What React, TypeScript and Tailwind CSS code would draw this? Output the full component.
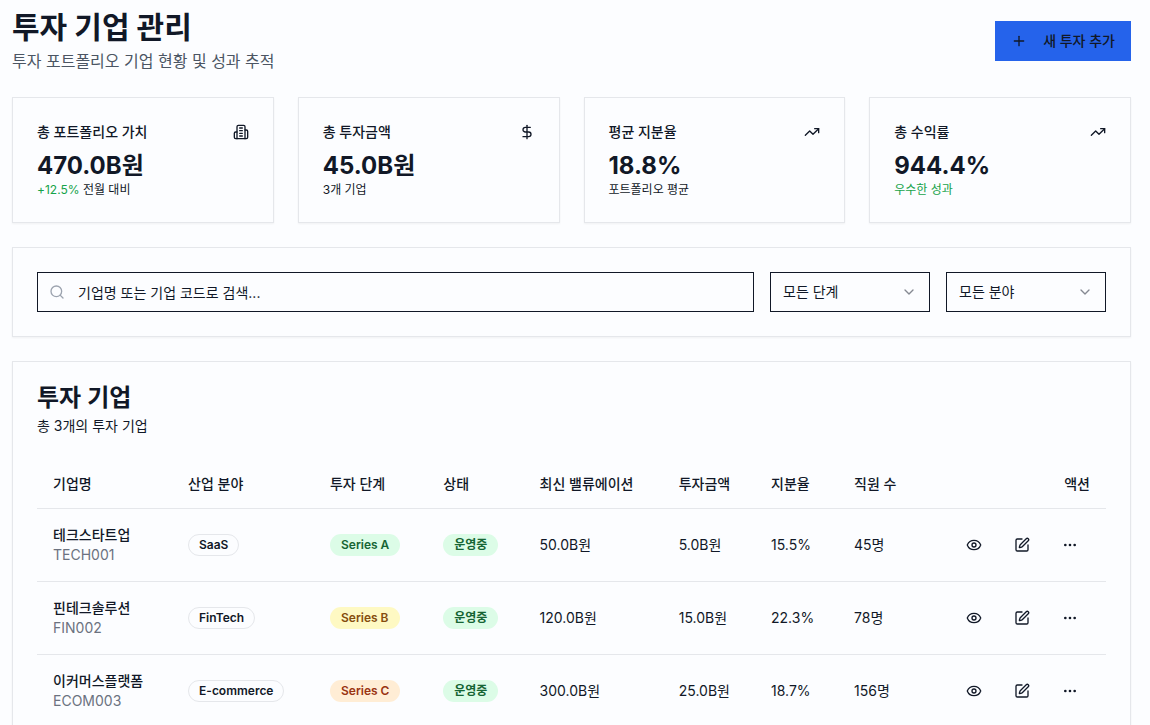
import { useState } from "react";
import { ChevronDown, DollarSign, Ellipsis, Eye, Plus, Search, SquarePen, TrendingUp } from "lucide-react";
import type { ComponentType, ReactNode } from "react";

type IconType = ComponentType<{ className?: string }>;

type Company = {
  name: string;
  code: string;
  sector: string;
  stage: string;
  status: string;
  valuation: string;
  invested: string;
  share: string;
  employees: string;
};

const companies: Company[] = [
  {
    name: "테크스타트업",
    code: "TECH001",
    sector: "SaaS",
    stage: "Series A",
    status: "운영중",
    valuation: "50.0B원",
    invested: "5.0B원",
    share: "15.5%",
    employees: "45명"
  },
  {
    name: "핀테크솔루션",
    code: "FIN002",
    sector: "FinTech",
    stage: "Series B",
    status: "운영중",
    valuation: "120.0B원",
    invested: "15.0B원",
    share: "22.3%",
    employees: "78명"
  },
  {
    name: "이커머스플랫폼",
    code: "ECOM003",
    sector: "E-commerce",
    stage: "Series C",
    status: "운영중",
    valuation: "300.0B원",
    invested: "25.0B원",
    share: "18.7%",
    employees: "156명"
  }
];

const stageColors: Record<string, string> = {
  "Series A": "border-transparent bg-[#dcfce7] text-[#166534]",
  "Series B": "border-transparent bg-[#fef9c3] text-[#854d0e]",
  "Series C": "border-transparent bg-[#ffedd5] text-[#9a3412]"
};

const columns = ["기업명", "산업 분야", "투자 단계", "상태", "최신 밸류에이션", "투자금액", "지분율", "직원 수"];

function BuildingIcon({ className }: { className?: string }) {
  return (
    <svg
      viewBox="0 0 24 24"
      fill="none"
      stroke="currentColor"
      strokeWidth="2"
      strokeLinecap="round"
      strokeLinejoin="round"
      aria-hidden="true"
      className={className}
    >
      <path d="M6 22V4a2 2 0 0 1 2-2h8a2 2 0 0 1 2 2v18Z" />
      <path d="M6 12H4a2 2 0 0 0-2 2v6a2 2 0 0 0 2 2h2" />
      <path d="M18 9h2a2 2 0 0 1 2 2v9a2 2 0 0 1-2 2h-2" />
      <path d="M10 6h4" />
      <path d="M10 10h4" />
      <path d="M10 14h4" />
      <path d="M10 18h4" />
    </svg>
  );
}

function StatCard({
  title,
  value,
  icon: Icon,
  children
}: {
  title: string;
  value: string;
  icon: IconType;
  children: ReactNode;
}) {
  return (
    <section className="border border-[#e5e7eb] p-6 shadow-xs">
      <div className="flex items-center justify-between pb-2">
        <h3 className="text-sm font-medium">{title}</h3>
        <Icon className="size-4" />
      </div>
      <div className="text-2xl font-bold">{value}</div>
      <p className="text-xs">{children}</p>
    </section>
  );
}

function Badge({ className, children }: { className: string; children: ReactNode }) {
  return (
    <span className={`inline-flex items-center rounded-full border px-2.5 py-0.5 text-xs font-semibold ${className}`}>
      {children}
    </span>
  );
}

function FilterSelect({
  label,
  value,
  options,
  onChange
}: {
  label: string;
  value: string;
  options: string[];
  onChange: (value: string) => void;
}) {
  return (
    <div className="relative w-40 border border-[#111827]">
      <select
        aria-label={label}
        value={value}
        onChange={(event) => onChange(event.target.value)}
        className="block h-[38px] w-full appearance-none bg-transparent px-3 text-sm"
      >
        {options.map((option) => (
          <option key={option}>{option}</option>
        ))}
      </select>
      <ChevronDown className="pointer-events-none absolute top-[11px] right-3 size-4 opacity-50" />
    </div>
  );
}

function IconButton({ label, icon: Icon }: { label: string; icon: IconType }) {
  return (
    <button type="button" aria-label={label} className="inline-flex h-9 items-center px-3">
      <Icon className="size-4" />
    </button>
  );
}

export default function App() {
  const [query, setQuery] = useState("");
  const [stage, setStage] = useState("모든 단계");
  const [sector, setSector] = useState("모든 분야");

  const visible = companies.filter(
    (company) =>
      (company.name.includes(query) || company.code.includes(query.toUpperCase())) &&
      (stage === "모든 단계" || company.stage === stage) &&
      (sector === "모든 분야" || company.sector === sector)
  );

  return (
    <main className="min-h-screen space-y-6 bg-[#fcfdff] pt-[9px] pr-[19px] pb-6 pl-3 font-['Inter','Noto_Sans_CJK_KR',sans-serif] text-[#111827]">
      <header className="flex items-center justify-between">
        <div>
          <h1 className="text-3xl font-bold">투자 기업 관리</h1>
          <p className="mt-1 text-base text-[#4b5563]">투자 포트폴리오 기업 현황 및 성과 추적</p>
        </div>
        <button type="button" className="inline-flex h-10 items-center gap-4 bg-[#2563eb] px-4 text-sm font-medium">
          <Plus className="size-4" />
          새 투자 추가
        </button>
      </header>

      <div className="grid grid-cols-4 gap-6">
        <StatCard title="총 포트폴리오 가치" value="470.0B원" icon={BuildingIcon}>
          <span className="text-[#16a34a]">+12.5%</span> 전월 대비
        </StatCard>
        <StatCard title="총 투자금액" value="45.0B원" icon={DollarSign}>
          3개 기업
        </StatCard>
        <StatCard title="평균 지분율" value="18.8%" icon={TrendingUp}>
          포트폴리오 평균
        </StatCard>
        <StatCard title="총 수익률" value="944.4%" icon={TrendingUp}>
          <span className="text-[#16a34a]">우수한 성과</span>
        </StatCard>
      </div>

      <section className="flex gap-4 border border-[#e5e7eb] p-6 shadow-xs">
        <div className="relative flex-1">
          <Search className="absolute top-3 left-3 size-4 text-[#9ca3af]" />
          <input
            type="text"
            aria-label="기업 검색"
            value={query}
            onChange={(event) => setQuery(event.target.value)}
            placeholder="기업명 또는 기업 코드로 검색..."
            className="h-10 w-full border border-[#111827] bg-transparent pr-3 pl-10 text-sm placeholder:text-[#111827]"
          />
        </div>
        <FilterSelect
          label="투자 단계"
          value={stage}
          options={["모든 단계", "Series A", "Series B", "Series C"]}
          onChange={setStage}
        />
        <FilterSelect
          label="산업 분야"
          value={sector}
          options={["모든 분야", "SaaS", "FinTech", "E-commerce"]}
          onChange={setSector}
        />
      </section>

      <section className="border border-[#e5e7eb] p-6 shadow-xs">
        <h2 className="text-2xl leading-6 font-semibold">투자 기업</h2>
        <p className="mt-1.5 text-sm">총 {visible.length}개의 투자 기업</p>

        <table className="mt-6 w-full text-sm">
          <thead>
            <tr className="border-b border-[#e5e7eb]">
              {columns.map((column) => (
                <th key={column} className="h-12 px-4 text-left font-medium">
                  {column}
                </th>
              ))}
              <th className="h-12 px-4 text-right font-medium">액션</th>
            </tr>
          </thead>
          <tbody>
            {visible.map((company) => (
              <tr key={company.code} className="border-b border-[#e5e7eb] last:border-b-0">
                <td className="p-4">
                  <div className="font-medium">{company.name}</div>
                  <div className="text-[#6b7280]">{company.code}</div>
                </td>
                <td className="p-4">
                  <Badge className="border-[#e5e7eb]">{company.sector}</Badge>
                </td>
                <td className="p-4">
                  <Badge className={stageColors[company.stage]}>{company.stage}</Badge>
                </td>
                <td className="p-4">
                  <Badge className="border-transparent bg-[#dcfce7] text-[#166534]">{company.status}</Badge>
                </td>
                <td className="p-4">{company.valuation}</td>
                <td className="p-4">{company.invested}</td>
                <td className="p-4">{company.share}</td>
                <td className="p-4">{company.employees}</td>
                <td className="p-4">
                  <div className="flex items-center justify-end gap-2">
                    <IconButton label="보기" icon={Eye} />
                    <IconButton label="수정" icon={SquarePen} />
                    <IconButton label="더보기" icon={Ellipsis} />
                  </div>
                </td>
              </tr>
            ))}
          </tbody>
        </table>
      </section>
    </main>
  );
}
